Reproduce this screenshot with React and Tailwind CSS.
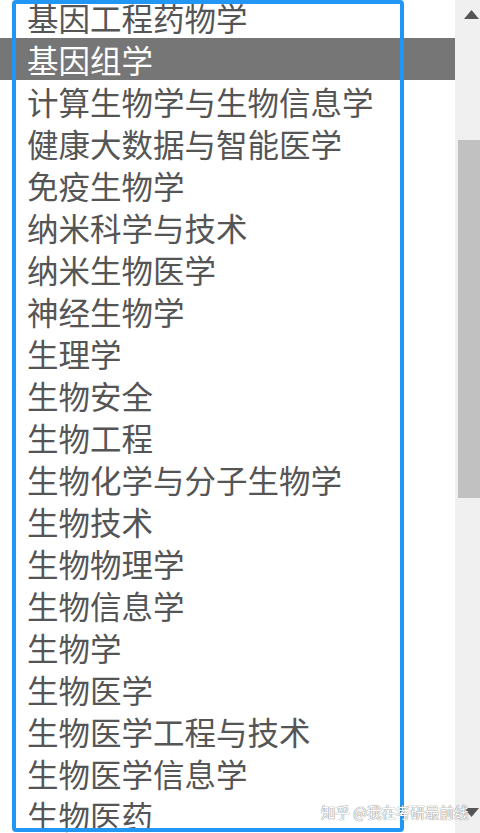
import React from "react";

const items = [
  "基因工程药物学",
  "基因组学",
  "计算生物学与生物信息学",
  "健康大数据与智能医学",
  "免疫生物学",
  "纳米科学与技术",
  "纳米生物医学",
  "神经生物学",
  "生理学",
  "生物安全",
  "生物工程",
  "生物化学与分子生物学",
  "生物技术",
  "生物物理学",
  "生物信息学",
  "生物学",
  "生物医学",
  "生物医学工程与技术",
  "生物医学信息学",
  "生物医药",
];

function App() {
  const selected = 1;

  return (
    <div className="relative w-[480px] h-[833px] overflow-hidden bg-white flex font-['Noto_Sans_CJK_SC','Noto_Sans',sans-serif]">
      <div className="flex-1 overflow-hidden">
        <ul className="mt-[-4px]">
          {items.map((name, i) => (
            <li
              key={name}
              className={
                i === selected
                  ? "h-[42px] leading-[42px] pl-[27px] text-[31.5px] whitespace-nowrap bg-[#767676] text-white"
                  : "h-[42px] leading-[42px] pl-[27px] text-[31.5px] whitespace-nowrap text-[#555555]"
              }
            >
              {name}
            </li>
          ))}
        </ul>
      </div>

      <div className="w-[25px] bg-[#f0f0f0] flex flex-col">
        <div className="h-[30px] flex items-center justify-end pr-[1px]">
          <svg width="15" height="10" viewBox="0 0 15 10">
            <polygon points="7.5,0 15,9 0,9" fill="#555" />
          </svg>
        </div>
        <div className="mt-[110px] ml-[3px] h-[358px] bg-[#c1c1c1]" />
        <div className="flex-1" />
        <div className="h-[26px] flex items-start justify-end pt-[1px] pr-[1px]">
          <svg width="15" height="10" viewBox="0 0 15 10">
            <polygon points="0,0 15,0 7.5,9" fill="#555" />
          </svg>
        </div>
      </div>

      <div className="absolute left-[12px] top-0 w-[392px] h-[832px] border-4 border-[#2196f3] rounded-[4px] pointer-events-none" />

      <div className="absolute left-[321px] top-[802px] text-[14.5px] leading-[20px] text-white whitespace-nowrap [text-shadow:0_0_1px_#777,0_0_1px_#777]">
        知乎 @我在考研最前线
      </div>
    </div>
  );
}

export default App;
